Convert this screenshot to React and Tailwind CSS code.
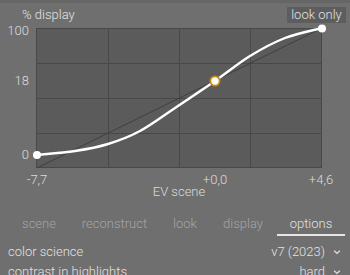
import React from "react";

const curvePts = [
  [37, 155], [75, 151], [108, 144], [140, 131], [175, 108], [215, 81], [250, 56], [285, 38], [322, 28],
];

function catmull(pts) {
  let d = `M${pts[0][0]},${pts[0][1]}`;
  for (let i = 0; i < pts.length - 1; i++) {
    const p0 = pts[i - 1] || pts[i];
    const p1 = pts[i];
    const p2 = pts[i + 1];
    const p3 = pts[i + 2] || p2;
    const c1x = p1[0] + (p2[0] - p0[0]) / 6;
    const c1y = p1[1] + (p2[1] - p0[1]) / 6;
    const c2x = p2[0] - (p3[0] - p1[0]) / 6;
    const c2y = p2[1] - (p3[1] - p1[1]) / 6;
    d += ` C${c1x.toFixed(2)},${c1y.toFixed(2)} ${c2x.toFixed(2)},${c2y.toFixed(2)} ${p2[0]},${p2[1]}`;
  }
  return d;
}

function Chevron() {
  return (
    <svg width="8" height="8" viewBox="0 0 8 8" className="ml-[8px]">
      <path d="M1.2 2.8 L4 5.4 L6.8 2.8" fill="none" stroke="#e0e0e0" strokeWidth="1.3" />
    </svg>
  );
}

export default function App() {
  const tabs = [
    { label: "scene", w: "w-[58px]" },
    { label: "reconstruct", w: "w-[93px]" },
    { label: "look", w: "w-[48px]" },
    { label: "display", w: "w-[68px]" },
    { label: "options", w: "w-[68px]", active: true },
  ];
  return (
    <div
      className="w-[350px] h-[275px] overflow-hidden bg-[#6f6f6f] text-[13px] font-light text-[#e2e2e2] flex flex-col"
      style={{ fontFamily: "Roboto, 'Liberation Sans', sans-serif" }}
    >
      <div className="h-[3px] bg-[#666666] shrink-0" />
      <div className="h-[21px] shrink-0 flex justify-between items-start pt-[4px]">
        <div className="pl-[22px] leading-[16px]">% display</div>
        <div className="mr-[4px] w-[59px] h-[16px] leading-[16px] text-center bg-[#5d5d5d]">look only</div>
      </div>
      <svg width="350" height="176" viewBox="0 24 350 176" className="shrink-0 block">
        <rect x="36.5" y="28.5" width="285" height="139" fill="#5b5b5b" stroke="#484848" strokeWidth="1" />
        {[108, 179, 250].map((x) => (
          <line key={x} x1={x + 0.5} y1="28" x2={x + 0.5} y2="168" stroke="#484848" strokeWidth="1" />
        ))}
        {[63, 98, 133].map((y) => (
          <line key={y} x1="36" y1={y + 0.5} x2="322" y2={y + 0.5} stroke="#484848" strokeWidth="1" />
        ))}
        <line x1="37" y1="168" x2="322" y2="28" stroke="#404040" strokeWidth="1" />
        <path d={catmull(curvePts)} fill="none" stroke="#ffffff" strokeWidth="2.4" strokeLinecap="round" />
        <circle cx="37" cy="155" r="4" fill="#ffffff" />
        <circle cx="322" cy="28.5" r="4" fill="#ffffff" />
        <circle cx="215" cy="81" r="4.6" fill="#ffffff" stroke="#c98a10" strokeWidth="1.8" />
        <g fill="#dcdcdc" fontSize="13" fontWeight="300" style={{ fontFamily: "Roboto, 'Liberation Sans', sans-serif" }}>
          <text x="29" y="35" textAnchor="end">100</text>
          <text x="29" y="85" textAnchor="end">18</text>
          <text x="29" y="159" textAnchor="end">0</text>
          <text x="37" y="184" textAnchor="middle">-7,7</text>
          <text x="215" y="184" textAnchor="middle">+0,0</text>
          <text x="321" y="184" textAnchor="middle">+4,6</text>
          <text x="179" y="196" textAnchor="middle">EV scene</text>
        </g>
      </svg>
      <div className="flex pl-[10px] shrink-0">
        {tabs.map((t) => (
          <div
            key={t.label}
            className={`${t.w} text-center pt-[16px] pb-[2px] leading-[16px] border-b-2 ${
              t.active ? "border-[#e6e6e6] text-[#e2e2e2]" : "border-transparent text-[#a4a4a4]"
            }`}
          >
            {t.label}
          </div>
        ))}
      </div>
      <div className="mt-[6px] flex flex-col shrink-0">
        <div className="h-[20px] leading-[20px] flex items-center justify-between pl-[8px] pr-[9px]">
          <span>color science</span>
          <span className="flex items-center">v7 (2023)<Chevron /></span>
        </div>
        <div className="h-[20px] leading-[20px] flex items-center justify-between pl-[8px] pr-[9px]">
          <span>contrast in highlights</span>
          <span className="flex items-center">hard<Chevron /></span>
        </div>
      </div>
    </div>
  );
}
